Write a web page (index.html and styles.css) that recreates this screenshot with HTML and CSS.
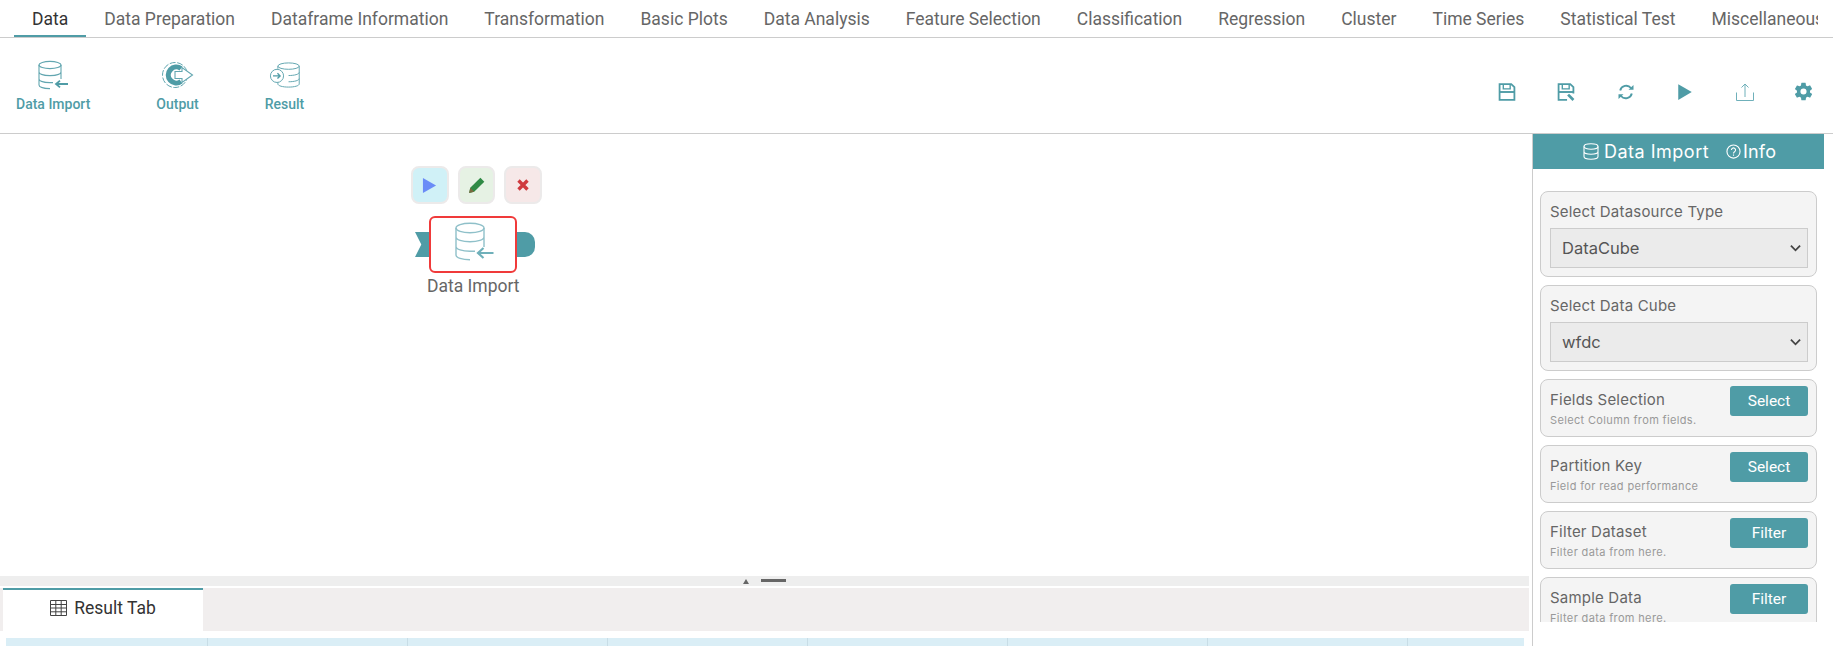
FILE: index.html
```html
<!DOCTYPE html>
<html lang="en">
<head>
<meta charset="utf-8">
<title>Workflow</title>
<link rel="stylesheet" href="styles.css">
</head>
<body>
<div class="app">
  <nav class="tabs">
    <a class="tab active">Data</a>
    <a class="tab">Data Preparation</a>
    <a class="tab">Dataframe Information</a>
    <a class="tab">Transformation</a>
    <a class="tab">Basic Plots</a>
    <a class="tab">Data Analysis</a>
    <a class="tab">Feature Selection</a>
    <a class="tab">Classification</a>
    <a class="tab">Regression</a>
    <a class="tab">Cluster</a>
    <a class="tab">Time Series</a>
    <a class="tab">Statistical Test</a>
    <a class="tab">Miscellaneous</a>
  </nav>

  <header class="toolbar">
    <div class="tools">
      <div class="tool">
        <svg class="tool-icon" viewBox="0 0 32 30" fill="none" stroke="#62a6b0" stroke-width="1.1">
          <ellipse cx="13" cy="5" rx="11" ry="3.6"/>
          <path d="M2 5v20c0 2.2 5 3.6 11 3.6M24 5v14M2 12c0 2.2 5 3.6 11 3.6s11-1.4 11-3.6M2 19c0 2.2 5 3.6 11 3.6h3"/>
          <path d="M31 24H19m4-3.4L19 24l4 3.4" stroke="#4f9ca6" stroke-width="1.8"/>
        </svg>
        <span>Data Import</span>
      </div>
      <div class="tool">
        <svg class="tool-icon" viewBox="0 0 32 30" fill="none">
          <circle cx="13" cy="15" r="12.5" stroke="#62a6b0" stroke-dasharray="6 1.6"/>
          <path d="M19 8.500A8 8 0 1 0 19 21.500" stroke="#4f9ca6" stroke-width="5.200"/>
          <path d="M13 11.500h7V7.500L30.500 15 20 22.500v-4h-7z" fill="#fff" stroke="#62a6b0" stroke-width="1.100"/>
        </svg>
        <span>Output</span>
      </div>
      <div class="tool">
        <svg class="tool-icon" viewBox="0 0 36 30" fill="none" stroke="#62a6b0" stroke-width="1.1">
          <ellipse cx="22" cy="5" rx="12" ry="3.6"/>
          <path d="M34 5v20c0 2.2-5.400 3.600-12 3.600S10 27.200 10 25v-3M10 8V5M34 12c0 2.200-5.400 3.600-12 3.600M34 19c0 2.200-5.400 3.600-12 3.600"/>
          <circle cx="9" cy="16" r="7.400" fill="#fff"/>
          <path d="M4.500 16h8m-3-3 3 3-3 3" stroke="#4f9ca6" stroke-width="1.500"/>
        </svg>
        <span>Result</span>
      </div>
    </div>
    <div class="actions">
      <svg class="action" viewBox="0 0 16 17" fill="none" stroke="#4f9ca6"><path d="M1 1h11l3 3v12H1z" stroke-width="1.700"/><path d="M1 8.500h14" stroke-width="1.800"/><path d="M4.500 1v4.500h6.500V1" stroke-width="1.300"/></svg>
      <svg class="action" viewBox="0 0 16 17" fill="none" stroke="#4f9ca6"><path d="M9 16H1V1h11l3 3v6" stroke-width="1.700"/><path d="M1 8.500h14" stroke-width="1.800"/><path d="M4.500 1v4.500h6.500V1" stroke-width="1.300"/><path d="M10 11l5 5" stroke-width="2.600"/></svg>
      <svg class="action" viewBox="0 0 18 16" fill="none" stroke="#4f9ca6" stroke-width="1.900"><path d="M3.200 6.500A6.200 6.200 0 0 1 14 4"/><path d="M14.800 9.500A6.200 6.200 0 0 1 4 12"/><path d="M11.500 5.800h5V1z" fill="#4f9ca6" stroke="none"/><path d="M6.500 10.200h-5V15z" fill="#4f9ca6" stroke="none"/></svg>
      <svg class="action" viewBox="0 0 14 16"><path d="M1 1l12 7L1 15z" fill="#4f9ca6"/></svg>
      <svg class="action" viewBox="0 0 18 18" fill="none" stroke="#6fb0ba" stroke-width="1"><path d="M.5 9.500v8h17v-8M9 14V1M5.500 4.500 9 1l3.500 3.500"/></svg>
      <svg class="action gear" viewBox="0 0 24 24"><path fill="#4f9ca6" d="M19.400 13c.04-.33.06-.66.06-1s-.02-.67-.06-1l2.100-1.650c.19-.15.24-.42.12-.64l-2-3.460c-.12-.22-.38-.3-.6-.22l-2.500 1a7.300 7.300 0 0 0-1.700-1l-.38-2.650A.5.500 0 0 0 14 2h-4a.5.500 0 0 0-.5.420l-.37 2.650c-.6.250-1.160.590-1.700 1l-2.500-1c-.22-.08-.48 0-.6.220l-2 3.460c-.12.220-.07.490.12.640L4.570 11c-.04.330-.07.670-.07 1s.03.670.07 1l-2.110 1.650c-.19.150-.24.420-.12.640l2 3.460c.12.220.38.300.6.220l2.500-1c.52.400 1.080.740 1.700 1l.37 2.650c.03.240.24.420.5.420h4c.25 0 .46-.18.500-.42l.37-2.650c.62-.26 1.180-.6 1.700-1l2.500 1c.22.080.48 0 .6-.22l2-3.460c.12-.22.070-.49-.12-.64zM12 15.500a3.500 3.500 0 1 1 0-7 3.500 3.500 0 0 1 0 7z"/></svg>
    </div>
  </header>

  <main class="main">
    <section class="workspace">
      <div class="canvas">
        <div class="node">
          <div class="node-buttons">
            <button class="node-btn run"><svg viewBox="0 0 14 16" class="node-glyph"><path d="M0 0l14 8-14 8z" fill="#6a8cf7"/></svg></button>
            <button class="node-btn edit"><svg viewBox="0 0 16 16" class="node-glyph wide"><path d="M1 15l1-4.500L11 1.500l3.500 3.500-9 9z" fill="#2f8a45"/><path d="M1 15l1-4.500L5.500 14z" fill="#7a6a40"/></svg></button>
            <button class="node-btn remove"><svg viewBox="0 0 12 12" class="node-glyph small"><path d="M1.500 1.500l9 9m0-9l-9 9" stroke="#cf3a3f" stroke-width="3.400"/></svg></button>
          </div>
          <div class="node-body">
            <span class="port-in"></span>
            <div class="node-box">
              <svg class="node-icon" viewBox="0 0 40 40" fill="none" stroke="#8fc0c9" stroke-width="1.400">
                <ellipse cx="16" cy="6" rx="14" ry="4.800"/>
                <path d="M2 6v27c0 2.800 6.200 4.800 14 4.800M30 6v19M2 15c0 2.800 6.200 4.800 14 4.800S30 17.800 30 15M2 24.500c0 2.800 6.200 4.800 14 4.800h5"/>
                <path d="M39.500 31H24m5.500-5L24 31l5.500 5" stroke="#6fb0ba" stroke-width="2.200"/>
              </svg>
            </div>
            <span class="port-out"></span>
          </div>
          <div class="node-label">Data Import</div>
        </div>
      </div>
      <div class="splitter"><span class="caret"></span><span class="grip"></span></div>
      <div class="result-tabs">
        <div class="result-tab">
          <svg class="grid-icon" viewBox="0 0 17 16" fill="none" stroke="#444" stroke-width="1"><path d="M.5.500h16v15H.5zM.5 4.500h16M.5 8h16M.5 11.800h16M5.800.500v15M11.200.500v15"/></svg>
          <span>Result Tab</span>
        </div>
      </div>
      <div class="table-head">
        <span class="col"></span><span class="col"></span><span class="col"></span><span class="col"></span><span class="col"></span><span class="col"></span><span class="col"></span><span class="col"></span>
      </div>
    </section>

    <aside class="panel">
      <div class="panel-head">
        <svg class="head-icon" viewBox="0 0 16 17" fill="none" stroke="#fff" stroke-width="1.100"><ellipse cx="8" cy="3.500" rx="7" ry="2.700"/><path d="M1 3.500v10c0 1.500 3.100 2.700 7 2.700s7-1.200 7-2.700v-10M1 8.500c0 1.500 3.100 2.700 7 2.700s7-1.200 7-2.700"/></svg>
        <span class="head-title">Data Import</span>
        <svg class="info-icon" viewBox="0 0 16 16" fill="none" stroke="#fff" stroke-width="1.200"><circle cx="8" cy="8" r="7"/><path d="M5.800 6.300a2.200 2.200 0 1 1 3.400 1.900c-.8.500-1.200.9-1.200 1.800M8 11.300v1.200"/></svg>
        <span class="head-info">Info</span>
      </div>
      <div class="panel-scroll">
        <div class="card">
          <label class="field-label">Select Datasource Type</label>
          <div class="select-wrap">
            <select class="select"><option>DataCube</option></select>
            <svg class="chevron" viewBox="0 0 12 8" fill="none" stroke="#444" stroke-width="2"><path d="M1 1.500l5 5 5-5"/></svg>
          </div>
        </div>
        <div class="card">
          <label class="field-label">Select Data Cube</label>
          <div class="select-wrap">
            <select class="select"><option>wfdc</option></select>
            <svg class="chevron" viewBox="0 0 12 8" fill="none" stroke="#444" stroke-width="2"><path d="M1 1.500l5 5 5-5"/></svg>
          </div>
        </div>
        <div class="card row">
          <div class="row-text"><div class="row-title">Fields Selection</div><div class="row-sub">Select Column from fields.</div></div>
          <button class="btn">Select</button>
        </div>
        <div class="card row">
          <div class="row-text"><div class="row-title">Partition Key</div><div class="row-sub">Field for read performance</div></div>
          <button class="btn">Select</button>
        </div>
        <div class="card row">
          <div class="row-text"><div class="row-title">Filter Dataset</div><div class="row-sub">Filter data from here.</div></div>
          <button class="btn">Filter</button>
        </div>
        <div class="card row">
          <div class="row-text"><div class="row-title">Sample Data</div><div class="row-sub">Filter data from here.</div></div>
          <button class="btn">Filter</button>
        </div>
      </div>
    </aside>
  </main>
</div>
</body>
</html>
```
FILE: styles.css
```css
* { box-sizing: border-box; }
html, body { margin: 0; height: 100%; background: #fff; overflow: hidden; }
body { font-family: Roboto, "Liberation Sans", sans-serif; color: #666; }
.app { width: 1833px; height: 646px; display: flex; flex-direction: column; overflow: hidden; }

.tabs { flex: none; height: 38px; width: 1818px; padding-left: 14px; display: flex; overflow: hidden; }
.tab { flex: none; height: 38px; padding: 0 18px; font-size: 17.5px; line-height: 38px; color: #666; white-space: nowrap; }
.tab.active { color: #333; border-bottom: 3px solid #4f9ca6; }

.toolbar { flex: none; height: 97px; margin-top: -1px; border-top: 1px solid #ccc; border-bottom: 1px solid #ccc; display: flex; justify-content: space-between; }
.tools { display: flex; gap: 66px; padding: 22px 0 0 16px; }
.tool { display: flex; flex-direction: column; align-items: center; gap: 6px; font-size: 14px; font-weight: 500; color: #4f9ca6; }
.tool-icon { width: 32px; height: 30px; }
.actions { width: 335px; padding: 12px 20px 0 0; display: flex; align-items: center; justify-content: space-between; }
.action { width: 18px; height: 18px; flex: none; }
.action.gear { width: 21px; height: 21px; margin: 0 -1.500px; }

.main { flex: 1; min-height: 0; display: flex; }
.workspace { width: 1532px; flex: none; padding-right: 3px; display: flex; flex-direction: column; }
.canvas { flex: 1; position: relative; }
.node { position: absolute; left: 411px; top: 32px; width: 131px; }
.node-buttons { display: flex; gap: 9px; }
.node-btn { width: 38px; height: 38px; padding: 0; border: 2px solid #eceaea; border-radius: 8px; display: flex; align-items: center; justify-content: center; }
.node-btn.run { background: #d0f1f7; }
.node-btn.edit { background: #e6f2e4; }
.node-btn.remove { background: #f6e8e8; }
.node-glyph { width: 15px; height: 15px; }
.node-glyph.wide { width: 18px; height: 18px; }
.node-glyph.small { width: 12px; height: 12px; }
.node-body { display: flex; align-items: center; margin-top: 12px; }
.port-in { width: 14px; height: 25px; margin-left: 4px; background: #4f9ca6; clip-path: polygon(0 0, 100% 0, 100% 100%, 0 100%, 45% 50%); }
.node-box { width: 88px; height: 57px; border: 2.500px solid #f03a3a; border-radius: 6px; background: #fff; display: flex; justify-content: center; padding: 4px 0 0 2px; }
.node-icon { width: 40px; height: 40px; }
.port-out { width: 18px; height: 25px; background: #4f9ca6; border-radius: 0 10px 10px 0; }
.node-label { width: 131px; padding-left: 16px; font-size: 17.5px; line-height: 26px; color: #666; white-space: nowrap; text-align: left; }

.splitter { flex: none; height: 10px; background: #eee; display: flex; align-items: flex-start; margin-bottom: 2px; padding: 3px 0 0 743px; }
.caret { width: 0; height: 0; border-left: 3.500px solid transparent; border-right: 3.500px solid transparent; border-bottom: 5px solid #666; }
.grip { width: 25px; height: 3px; margin: 0 0 0 12px; background: #666; }

.result-tabs { flex: none; height: 43px; background: #f1eeee; padding-left: 3px; }
.result-tab { width: 200px; height: 43px; background: #fff; border-top: 2px solid #4f9ca6; display: flex; align-items: center; justify-content: center; gap: 7px; font-size: 17.5px; color: #333; padding-bottom: 5px; }
.grid-icon { width: 17px; height: 16px; }

.table-head { flex: none; height: 8px; margin: 7px 5px 0 6px; background: #daeef6; display: flex; overflow: hidden; }
.col { width: 200px; border-right: 1px solid #c8dde6; flex: none; }
.col:first-child { width: 202px; }

.panel { flex: 1; border-left: 1px solid #ccc; padding-right: 9px; font-family: "Inter", "Open Sans", sans-serif; }
.panel-head { height: 35px; background: #4f9ca6; color: #fff; display: flex; align-items: center; font-size: 18px; letter-spacing: .5px; padding-left: 50px; }
.head-icon { width: 16px; height: 17px; margin-right: 5px; }
.head-title { width: 105px; white-space: nowrap; margin-right: 17px; }
.info-icon { width: 15px; height: 15px; margin-right: 2px; }
.head-info { white-space: nowrap; letter-spacing: .2px; }

.panel-scroll { height: 453px; padding: 22px 7px 0 7px; overflow: hidden; display: flex; flex-direction: column; gap: 8px; }
.card { flex: none; background: #f4f4f4; border: 1px solid #ccc; border-radius: 8px; padding: 10px 8px 8px 9px; }
.field-label { display: block; font-size: 15px; line-height: 20px; letter-spacing: .2px; color: #666; margin-bottom: 6px; white-space: nowrap; }
.select-wrap { position: relative; height: 40px; }
.select { width: 100%; height: 40px; padding: 0 11px; appearance: none; background: #ebebeb; border: 1px solid #ccc; border-radius: 0; color: #555; font: inherit; font-size: 16.500px; }
.chevron { position: absolute; right: 7px; top: 16px; width: 11px; height: 8px; }
.row { height: 58px; display: flex; justify-content: space-between; align-items: flex-start; padding: 6px 8px 0 9px; }
.row-text { padding-top: 4px; }
.row-title { font-size: 15px; line-height: 20px; letter-spacing: .2px; color: #666; white-space: nowrap; }
.row-sub { font-size: 11px; line-height: 14px; letter-spacing: .35px; margin-top: 3px; color: #999; white-space: nowrap; }
.btn { width: 78px; height: 30px; flex: none; border: 0; border-radius: 3px; background: #4f9ca6; color: #fff; font-family: Roboto, sans-serif; font-size: 15.500px; font-weight: 400; }
```
